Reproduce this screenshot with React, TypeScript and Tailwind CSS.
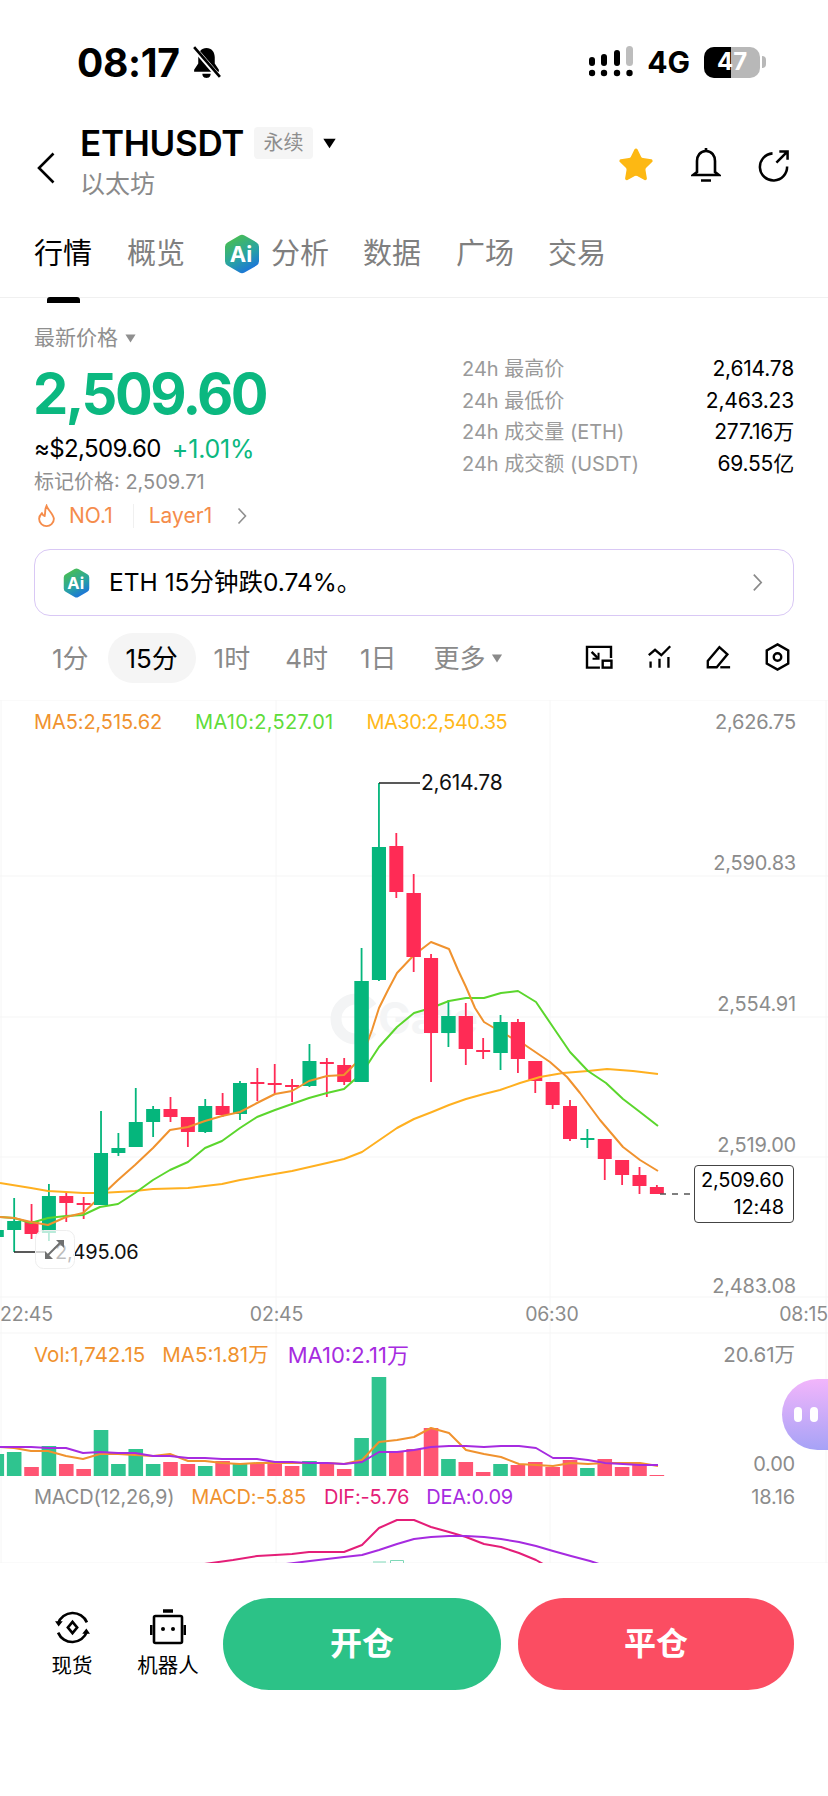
import { Star } from "lucide-react"

type Candle = [string, number, number, number, number]

const UP = "#05b67c"
const DOWN = "#ff2b55"

// colour, high, body top, body bottom, low (all in page y)
const candles: Candle[] = [
  [UP, 1226, 1230, 1237, 1242],
  [UP, 1198, 1221, 1230, 1252],
  [DOWN, 1204, 1221, 1234, 1239],
  [UP, 1184, 1196, 1233, 1241],
  [DOWN, 1192, 1196, 1203, 1222],
  [DOWN, 1197, 1203, 1205, 1219],
  [UP, 1111, 1153, 1205, 1205],
  [UP, 1133, 1148, 1153, 1156],
  [UP, 1088, 1122, 1147, 1147],
  [UP, 1106, 1109, 1122, 1137],
  [DOWN, 1097, 1109, 1117, 1122],
  [DOWN, 1117, 1117, 1132, 1147],
  [UP, 1099, 1106, 1132, 1133],
  [DOWN, 1093, 1106, 1115, 1117],
  [UP, 1081, 1083, 1114, 1120],
  [DOWN, 1068, 1082, 1084, 1101],
  [DOWN, 1064, 1083, 1085, 1094],
  [DOWN, 1079, 1085, 1087, 1102],
  [UP, 1044, 1061, 1086, 1087],
  [DOWN, 1058, 1062, 1064, 1097],
  [DOWN, 1058, 1065, 1082, 1085],
  [UP, 948, 981, 1082, 1082],
  [UP, 783, 847, 980, 981],
  [DOWN, 833, 846, 892, 898],
  [DOWN, 874, 893, 957, 972],
  [DOWN, 954, 958, 1033, 1082],
  [UP, 1000, 1016, 1033, 1047],
  [DOWN, 1003, 1016, 1049, 1065],
  [DOWN, 1038, 1050, 1052, 1059],
  [UP, 1015, 1022, 1053, 1070],
  [DOWN, 1019, 1022, 1059, 1073],
  [DOWN, 1061, 1061, 1081, 1093],
  [DOWN, 1082, 1082, 1105, 1109],
  [DOWN, 1100, 1106, 1139, 1141],
  [UP, 1129, 1138, 1140, 1148],
  [DOWN, 1139, 1139, 1159, 1180],
  [DOWN, 1160, 1160, 1175, 1185],
  [DOWN, 1167, 1175, 1186, 1194],
  [DOWN, 1185, 1187, 1194, 1194],
]

// volume bar tops, baseline is 1476
const volumes: [string, number][] = [
  [UP, 1454], [UP, 1452], [DOWN, 1467], [UP, 1446], [DOWN, 1464], [DOWN, 1469], [UP, 1430], [UP, 1464],
  [UP, 1449], [UP, 1464], [DOWN, 1462], [DOWN, 1464], [UP, 1466], [DOWN, 1461], [UP, 1463], [DOWN, 1463],
  [DOWN, 1464], [DOWN, 1466], [UP, 1461], [DOWN, 1464], [DOWN, 1469], [UP, 1438], [UP, 1377], [DOWN, 1452],
  [DOWN, 1449], [DOWN, 1428], [UP, 1459], [DOWN, 1462], [DOWN, 1472], [UP, 1464], [DOWN, 1465], [DOWN, 1462],
  [DOWN, 1467], [DOWN, 1460], [UP, 1468], [DOWN, 1459], [DOWN, 1467], [DOWN, 1464], [DOWN, 1475],
]

const ma5 = "0,1217 14,1218 31,1222 48,1225 66,1217 83,1213 100,1197 118,1180 135,1165 153,1148 170,1130 188,1127 205,1121 222,1116 240,1112 257,1103 275,1094 292,1091 309,1081 327,1076 344,1075 362,1057 372,1030 379,1008 388,990 397,973 414,955 431,942 449,949 458,970 466,987 475,1008 484,1022 501,1032 525,1045 550,1062 567,1077 580,1093 600,1120 623,1147 640,1160 658,1171"
const ma10 = "0,1217 14,1218 31,1223 48,1218 66,1216 83,1215 100,1207 118,1204 135,1193 153,1180 170,1170 188,1162 205,1148 222,1141 240,1128 257,1117 275,1110 292,1104 309,1098 327,1093 344,1089 362,1073 379,1047 397,1027 414,1013 431,1008 449,1001 466,998 484,998 501,993 518,991 536,1002 555,1030 570,1052 588,1071 606,1083 623,1099 640,1112 658,1126"
const ma30 = "0,1183 31,1188 48,1191 66,1192 83,1193 100,1193 118,1192 135,1191 153,1189 188,1188 222,1184 240,1180 257,1177 292,1171 327,1163 344,1159 362,1152 397,1128 414,1119 432,1112 449,1105 466,1099 484,1094 500,1090 520,1083 540,1077 563,1073 588,1071 607,1069 633,1071 658,1074"
const volMa5 = "0,1447 14,1448 31,1451 48,1451 66,1456 83,1459 100,1454 118,1454 135,1455 153,1456 170,1454 188,1461 205,1461 222,1463 240,1464 257,1463 275,1463 292,1463 309,1463 327,1463 344,1464 362,1460 379,1442 397,1440 414,1437 431,1428 449,1433 466,1450 484,1454 501,1457 519,1464 536,1465 553,1466 571,1463 588,1464 605,1463 623,1463 640,1463 658,1466"
const volMa10 = "0,1447 14,1447 31,1447 48,1448 66,1448 83,1453 100,1452 118,1453 135,1453 153,1456 170,1456 188,1458 205,1458 222,1459 240,1459 257,1459 275,1462 292,1462 309,1463 327,1463 344,1464 362,1462 379,1452 397,1452 414,1450 431,1447 449,1446 466,1446 484,1447 501,1446 519,1446 536,1448 553,1458 571,1458 588,1460 605,1463 623,1464 640,1465 658,1465"
const dif = "190,1566 233,1560 257,1556 275,1555 292,1554 309,1552 327,1552 344,1552 362,1545 379,1528 397,1520 414,1520 431,1527 449,1532 466,1537 484,1544 501,1547 519,1553 536,1560 550,1568"
const dea = "270,1566 310,1561 344,1557 362,1555 379,1550 397,1544 414,1539 431,1537 449,1536 466,1536 484,1537 501,1539 519,1542 536,1546 553,1551 571,1556 590,1561 605,1566"

const candleX = (i: number) => -3.2 + i * 17.37

function Hexagon({ id, className }: { id: string; className: string }) {
  return (
    <svg viewBox="0 0 36 40" className={className}>
      <defs>
        <linearGradient id={id} x1="0.2" y1="0" x2="0.7" y2="1">
          <stop offset="0" stopColor="#4cc04a" />
          <stop offset="0.55" stopColor="#2aa5a0" />
          <stop offset="1" stopColor="#1a6fe0" />
        </linearGradient>
      </defs>
      <path d="M15.5 1.4a5 5 0 0 1 5 0l12 7a5 5 0 0 1 2.5 4.3v14.6a5 5 0 0 1-2.5 4.3l-12 7a5 5 0 0 1-5 0l-12-7A5 5 0 0 1 1 27.3V12.7a5 5 0 0 1 2.5-4.3z" fill={`url(#${id})`} />
      <text x="17" y="28" textAnchor="middle" fill="#fff" fontSize="22" fontWeight="700" fontFamily="Inter">Ai</text>
    </svg>
  )
}

function Caret({ className }: { className: string }) {
  return (
    <svg viewBox="0 0 10 8" className={className}>
      <path d="M0.5 0.5h9L5 7.5z" fill="currentColor" />
    </svg>
  )
}

function Chevron({ className }: { className: string }) {
  return (
    <svg viewBox="0 0 10 18" fill="none" stroke="currentColor" strokeWidth="1.6" className={className}>
      <path d="M1.5 1.5 8.5 9l-7 7.5" />
    </svg>
  )
}

function StatusBar() {
  return (
    <div className="h-[124px] flex items-center justify-between pl-[77px] pr-[62px]">
      <div className="flex items-center gap-[11px]">
        <span className="text-[39px] leading-none font-bold text-black tracking-[-0.3px]">08:17</span>
        <svg viewBox="0 0 30 32" className="w-[31px] h-[33px]">
          <path d="M15 2c-5 0-8 4-8 9v6l-4 6v2h24v-2l-4-6v-6c0-5-3-9-8-9z" fill="#000" />
          <path d="M11 27h8c0 3-2 4-4 4s-4-1-4-4z" fill="#000" />
          <path d="M3 2l24 28" stroke="#fff" strokeWidth="5" />
          <path d="M3 1l25 29" stroke="#000" strokeWidth="2.6" />
        </svg>
      </div>
      <div className="flex items-center">
        <svg viewBox="0 0 44 34" className="w-[44px] h-[34px]">
          <rect x="0" y="12" width="6" height="9" rx="3" fill="#000" />
          <rect x="12" y="9" width="6" height="12" rx="3" fill="#000" />
          <rect x="25" y="5" width="6" height="16" rx="3" fill="#000" />
          <rect x="37" y="1" width="7" height="20" rx="3.5" fill="#bdbdbd" />
          <circle cx="3" cy="28" r="3.2" fill="#000" />
          <circle cx="15" cy="28" r="3.2" fill="#000" />
          <circle cx="28" cy="28" r="3.2" fill="#000" />
          <circle cx="40.5" cy="28" r="3.2" fill="#000" />
        </svg>
        <span className="ml-[14px] text-[30px] leading-none font-bold text-black">4G</span>
        <div className="ml-[14px] relative w-[56px] h-[31px] rounded-[10px] overflow-hidden bg-[#b8b8b8] flex items-center justify-center">
          <div className="absolute left-0 top-0 bottom-0 w-[27px] bg-black" />
          <span className="relative text-[24px] leading-none font-bold text-white">47</span>
        </div>
        <div className="ml-[2px] w-[4px] h-[12px] rounded-r-full bg-[#b8b8b8]" />
      </div>
    </div>
  )
}

function NavBar() {
  return (
    <div className="h-[76px] flex items-center pl-[37px] pr-[38px]">
      <svg viewBox="0 0 18 32" fill="none" stroke="#000" strokeWidth="2.6" className="w-[18px] h-[32px] mt-[12px]">
        <path d="M16.5 1.5 2 16l14.5 14.5" />
      </svg>
      <div className="ml-[25px] flex flex-col">
        <div className="flex items-center">
          <span className="text-[35px] leading-[38px] font-semibold tracking-[-0.3px] text-black">ETHUSDT</span>
          <span className="ml-[10px] w-[59px] h-[32px] rounded-[4px] bg-[#f5f5f5] flex items-center justify-center text-[20px] text-[#8e8e8e]">永续</span>
          <Caret className="ml-[9px] w-[15px] h-[11px] text-black" />
        </div>
        <span className="mt-[6px] text-[25px] leading-[32px] text-[#8a8a8a]">以太坊</span>
      </div>
      <div className="ml-auto flex items-center gap-[36px] mt-[6px]">
        <Star className="w-[38px] h-[38px] text-[#fdb813]" fill="#fdb813" strokeWidth={1} />
        <svg viewBox="0 0 30 36" fill="none" stroke="#000" strokeWidth="2.6" className="w-[30px] h-[36px]">
          <path d="M15 4c-6 0-9 5-9 10v11l-4 3h26l-4-3V14c0-5-3-10-9-10z" />
          <path d="M15 1v3M10 33.5h10" />
        </svg>
        <svg viewBox="0 0 34 34" fill="none" stroke="#000" strokeWidth="2.6" className="w-[33px] h-[33px]">
          <path d="M16 4.5A14 14 0 1 0 31 18" />
          <path d="M20 14 31 3M23 2.5h8.5V11" />
        </svg>
      </div>
    </div>
  )
}

function Tabs() {
  return (
    <div className="h-[98px] border-b border-[#f0f0f0] flex pl-[34px] text-[29px] text-[#7f7f7f]">
      <div className="relative mt-[32px] flex flex-col">
        <span className="leading-[44px] text-black">行情</span>
        <div className="absolute left-[13px] top-[65px] w-[33px] h-[6px] rounded-t-[3px] bg-black" />
      </div>
      <span className="ml-[35px] mt-[32px] leading-[44px]">概览</span>
      <Hexagon id="tab-ai" className="ml-[39px] mt-[34px] w-[36px] h-[40px]" />
      <span className="ml-[11px] mt-[32px] leading-[44px]">分析</span>
      <span className="ml-[34px] mt-[32px] leading-[44px]">数据</span>
      <span className="ml-[35px] mt-[32px] leading-[44px]">广场</span>
      <span className="ml-[34px] mt-[32px] leading-[44px]">交易</span>
    </div>
  )
}

const stats = [
  ["24h 最高价", "2,614.78"],
  ["24h 最低价", "2,463.23"],
  ["24h 成交量 (ETH)", "277.16万"],
  ["24h 成交额 (USDT)", "69.55亿"],
]

function PriceInfo() {
  return (
    <div className="h-[251px] px-[34px] flex justify-between">
      <div className="flex flex-col">
        <div className="mt-[26px] flex items-center h-[28px]">
          <span className="text-[21px] text-[#8f8f8f]">最新价格</span>
          <Caret className="ml-[6px] w-[13px] h-[9px] text-[#8f8f8f]" />
        </div>
        <div className="mt-[10px] -ml-[1px] text-[56px] leading-[64px] font-bold tracking-[-2.5px] text-[#0bb880]">2,509.60</div>
        <div className="mt-[8px] flex items-center leading-[30px]">
          <span className="text-[24px] tracking-[-0.6px] text-black">≈$2,509.60</span>
          <span className="ml-[11px] text-[25px] tracking-[-0.2px] text-[#0bb880]">+1.01%</span>
        </div>
        <div className="mt-[4px] text-[20px] leading-[28px] text-[#8f8f8f]">标记价格: 2,509.71</div>
        <div className="mt-[5px] flex items-center text-[21px] leading-[30px] text-[#f58c4b]">
          <svg viewBox="0 0 20 26" fill="none" stroke="#f58c4b" strokeWidth="2" className="ml-[3px] w-[19px] h-[24px]">
            <path d="M10 2c1 4 7 8 8 14 0 5-4 8-8 8s-8-3-8-8c0-3 2-5 3-6 1 2 2 3 3 3 1-4 0-7 2-11z" />
          </svg>
          <span className="ml-[13px]">NO.1</span>
          <div className="ml-[20px] w-px h-[24px] bg-[#f0f0f0]" />
          <span className="ml-[15px]">Layer1</span>
          <Chevron className="ml-[25px] w-[10px] h-[18px] text-[#8f8f8f]" />
        </div>
      </div>
      <div className="w-[332px] mt-[57px] flex flex-col gap-[3.5px] text-[20px] leading-[28px]">
        {stats.map(([label, value]) => (
          <div key={label} className="flex justify-between">
            <span className="text-[#9a9a9a]">{label}</span>
            <span className="text-[21px] text-black tracking-[-0.2px]">{value}</span>
          </div>
        ))}
      </div>
    </div>
  )
}

function AiBanner() {
  return (
    <div className="mx-[34px] h-[67px] rounded-[16px] border border-[#d9c8f5] flex items-center pl-[28px] pr-[30px]">
      <Hexagon id="banner-ai" className="w-[27px] h-[30px]" />
      <span className="ml-[19px] text-[24.5px] text-black">ETH 15分钟跌0.74%。</span>
      <Chevron className="ml-auto w-[11px] h-[19px] text-[#8a8a8a]" />
    </div>
  )
}

function Periods() {
  return (
    <div className="h-[84px] flex items-center text-[26px] text-[#8a8a8a]">
      <span className="ml-[52px]">1分</span>
      <span className="ml-[19px] w-[88px] h-[50px] rounded-[25px] bg-[#f5f5f5] flex items-center justify-center text-black">15分</span>
      <span className="ml-[18px]">1时</span>
      <span className="ml-[35px]">4时</span>
      <span className="ml-[32px]">1日</span>
      <span className="ml-[37px]">更多</span>
      <Caret className="ml-[5px] w-[12px] h-[9px]" />
      <div className="ml-auto mr-[38px] -mt-[2px] flex items-center gap-[34px]">
        <svg viewBox="0 0 30 26" fill="none" stroke="#000" strokeWidth="2.6" className="w-[28px] h-[24px]">
          <path d="M16 24.5H2V2h26v12" />
          <rect x="19" y="17" width="9.5" height="7.5" />
          <path d="M7 7.5l6.5 6.5" />
          <path d="M14.5 8.5v6.5H8" strokeWidth="2.2" />
        </svg>
        <svg viewBox="0 0 28 26" fill="none" stroke="#000" strokeWidth="2.6" className="w-[25px] h-[24px]">
          <path d="M2 11l7-6 7 6 10-10" />
          <path d="M4 18v7M14 15v10M24 13v12" />
        </svg>
        <svg viewBox="0 0 28 26" fill="none" stroke="#000" strokeWidth="2.6" className="w-[25px] h-[24px]">
          <path d="M2 24.5v-7L15 2l9 8-12 14.5z" />
          <path d="M16 24.5h11" />
        </svg>
        <svg viewBox="0 0 26 30" fill="none" stroke="#000" strokeWidth="2.6" className="w-[25px] h-[28px]">
          <path d="M13 1.5 24.5 8v14L13 28.5 1.5 22V8z" />
          <circle cx="13" cy="15" r="4" />
        </svg>
      </div>
    </div>
  )
}

function ChartDrawing() {
  const gridX = [1, 276, 550, 826]
  const gridY = [700, 876, 1017, 1157, 1297, 1333, 1563]
  return (
    <svg viewBox="0 700 828 863" className="absolute inset-0 w-[828px] h-[863px]">
      {gridX.map((x) => (
        <line key={x} x1={x} y1="700" x2={x} y2="1563" stroke="#f6f6f6" strokeWidth="1" />
      ))}
      {gridY.map((y) => (
        <line key={y} x1="0" y1={y} x2="828" y2={y} stroke="#f5f5f5" strokeWidth="1" />
      ))}
      <path d="M372 1007a20 20 0 1 0 0 24" fill="none" stroke="#f3f4f5" strokeWidth="11" />
      <text x="378" y="1034" fontSize="44" fontWeight="700" fontFamily="Inter" fill="#f4f5f6">Gate</text>

      {candles.map(([color, high, top, bottom, low], i) => {
        const x = candleX(i)
        return (
          <g key={i} fill={color}>
            <rect x={x - 0.9} y={high} width="1.8" height={low - high} />
            <rect x={x - 7} y={top} width="14" height={bottom - top} />
          </g>
        )
      })}
      <polyline points={ma30} fill="none" stroke="#ffb020" strokeWidth="2" strokeLinejoin="round" />
      <polyline points={ma10} fill="none" stroke="#5bd62d" strokeWidth="2" strokeLinejoin="round" />
      <polyline points={ma5} fill="none" stroke="#f0922e" strokeWidth="2" strokeLinejoin="round" />
      {/* bodies that cover the averages */}
      {[6, 21, 22, 24, 25, 26, 27, 29, 30].map((i) => (
        <rect key={i} x={candleX(i) - 7} y={candles[i][2]} width="14" height={candles[i][3] - candles[i][2]} fill={candles[i][0]} />
      ))}

      <path d="M379 783h41" stroke="#222" strokeWidth="1.5" />
      <text x="421" y="790" fontSize="21" fontFamily="Inter" fill="#111" letterSpacing="-0.2">2,614.78</text>
      <path d="M14 1252h31" stroke="#222" strokeWidth="1.5" />
      <text x="55" y="1259" fontSize="20" fontFamily="Inter" fill="#111" letterSpacing="-0.2">2,495.06</text>
      <rect x="35.5" y="1230.5" width="39" height="38" rx="8" fill="#fff" fillOpacity="0.72" stroke="#eeeeee" />
      <path d="M53 1250l7-7M48 1255l7-7" fill="none" stroke="#6f7070" strokeWidth="2" />
      <path d="M64 1240h-8l8 8zM45 1259v-8l8 8z" fill="#6f7070" />

      <path d="M660 1194h33" stroke="#555" strokeWidth="1.4" strokeDasharray="6 6" />

      {volumes.map(([color, top], i) => (
        <rect key={i} x={candleX(i) - 7.3} y={top} width="14.6" height={1476 - top} fill={color === UP ? "#2fc48f" : "#ff5573"} />
      ))}
      <polyline points={volMa5} fill="none" stroke="#f0922e" strokeWidth="2" strokeLinejoin="round" />
      <polyline points={volMa10} fill="none" stroke="#a62be0" strokeWidth="2" strokeLinejoin="round" />

      <polyline points={dif} fill="none" stroke="#e41e78" strokeWidth="2" strokeLinejoin="round" />
      <polyline points={dea} fill="none" stroke="#a62be0" strokeWidth="2" strokeLinejoin="round" />
      <path d="M373 1562h13M390.5 1563v-2.5h13v2.5" fill="none" stroke="#7fd8b8" strokeWidth="1" />
    </svg>
  )
}

function Chart() {
  return (
    <div className="relative h-[863px] overflow-hidden text-[20px] tracking-[-0.2px]">
      <ChartDrawing />
      <div className="relative h-[598px]">
        <div className="h-[44px] pl-[34px] flex items-center">
          <span className="tracking-[-0.1px] text-[#f0922e]">MA5:2,515.62</span>
          <span className="ml-[33px] tracking-[0.3px] text-[#5fdc3a]">MA10:2,527.01</span>
          <span className="ml-[33px] tracking-[-0.5px] text-[#ffb81a]">MA30:2,540.35</span>
        </div>
        <div className="absolute right-[32px] top-[8px] h-[592px] flex flex-col justify-between items-end text-[#8c8c8c] leading-[28px]">
          <span>2,626.75</span>
          <span>2,590.83</span>
          <span>2,554.91</span>
          <span>2,519.00</span>
          <span>2,483.08</span>
        </div>
        <div className="absolute left-[694px] top-[465px] w-[100px] h-[58px] rounded-[4px] border border-[#444] bg-white flex flex-col items-end justify-center pr-[9px] text-black leading-[27px]">
          <span>2,509.60</span>
          <span>12:48</span>
        </div>
      </div>
      <div className="relative h-[34px] flex items-center text-[19.5px] text-[#8c8c8c]">
        <span>22:45</span>
        <span className="ml-[197px]">02:45</span>
        <span className="ml-[222px]">06:30</span>
        <span className="ml-auto">08:15</span>
      </div>
      <div className="relative h-[146px]">
        <div className="h-[46px] pl-[34px] flex items-center text-[20.5px] tracking-[0px]">
          <span className="text-[#f0922e]">Vol:1,742.15</span>
          <span className="ml-[17px] text-[#f0922e]">MA5:1.81万</span>
          <span className="ml-[19px] text-[22px] text-[#a62be0]">MA10:2.11万</span>
          <span className="ml-auto mr-[33px] text-[#8c8c8c]">20.61万</span>
        </div>
        <div className="absolute right-[33px] top-[118px] text-[#8c8c8c] leading-[28px]">0.00</div>
      </div>
      <div className="relative h-[38px] pl-[34px] flex items-center">
        <span className="text-[#8c8c8c]">MACD(12,26,9)</span>
        <span className="ml-[17px] text-[#f0922e]">MACD:-5.85</span>
        <span className="ml-[18px] text-[#e41e78]">DIF:-5.76</span>
        <span className="ml-[17px] text-[#a62be0]">DEA:0.09</span>
        <span className="ml-auto mr-[33px] text-[#8c8c8c]">18.16</span>
      </div>
      <div className="absolute right-0 top-[679px] w-[46px] h-[71px] rounded-l-[36px] bg-gradient-to-b from-[#f2b5fb] to-[#a6a2f6] flex items-center gap-[8px] pl-[12px]">
        <div className="w-[8px] h-[15px] rounded-full bg-white" />
        <div className="w-[8px] h-[15px] rounded-full bg-white" />
      </div>
    </div>
  )
}

function BottomBar() {
  return (
    <div className="pt-[35px] flex items-start">
      <div className="w-[114px] mt-[11px] pl-[30px] flex flex-col items-center text-[20.5px] leading-[28px] text-black">
        <svg viewBox="0 0 36 36" fill="none" stroke="#000" strokeWidth="2.6" className="w-[37px] h-[37px]">
          <path d="M4 14A15 15 0 0 1 32 13" />
          <path d="M32 22A15 15 0 0 1 4 23" />
          <path d="M1 12l3.5 5 4-5zM35 24l-3.500-5-4 5z" fill="#000" stroke="none" />
          <path d="M18 12.500 22.500 18 18 23.500 13.500 18z" />
        </svg>
        <span className="mt-[6px]">现货</span>
      </div>
      <div className="w-[70px] mt-[11px] ml-[19px] flex flex-col items-center text-[20.5px] leading-[28px] text-black">
        <svg viewBox="0 0 36 36" fill="none" stroke="#000" strokeWidth="2.6" className="w-[36px] h-[36px]">
          <path d="M13 2h10" strokeWidth="3.500" />
          <rect x="4" y="7" width="28" height="27" rx="1.500" />
          <path d="M1 16v10M35 16v10" strokeWidth="3" />
          <circle cx="13" cy="20" r="2" fill="#000" stroke="none" />
          <circle cx="23" cy="20" r="2" fill="#000" stroke="none" />
        </svg>
        <span className="mt-[7px]">机器人</span>
      </div>
      <button className="ml-[20px] w-[278px] h-[92px] rounded-[46px] bg-[#2cc287] text-[32px] font-bold text-white">开仓</button>
      <button className="ml-[17px] w-[276px] h-[92px] rounded-[46px] bg-[#fb4d62] text-[32px] font-bold text-white">平仓</button>
    </div>
  )
}

export default function App() {
  return (
    <div className="w-[828px] h-[1796px] overflow-hidden bg-white font-['Inter','Noto_Sans_CJK_SC',sans-serif]">
      <StatusBar />
      <NavBar />
      <Tabs />
      <PriceInfo />
      <AiBanner />
      <Periods />
      <Chart />
      <BottomBar />
    </div>
  )
}
